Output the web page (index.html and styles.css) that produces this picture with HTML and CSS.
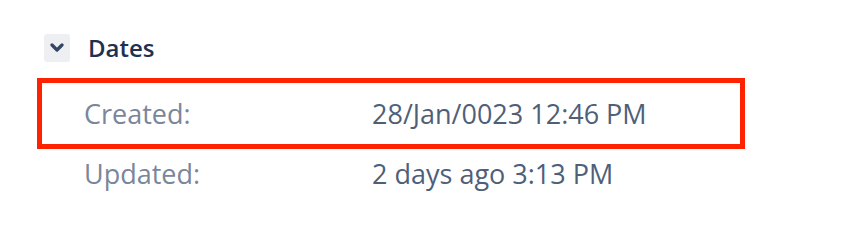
FILE: index.html
```html
<!DOCTYPE html>
<html>
<head>
<meta charset="utf-8">
<link rel="stylesheet" href="styles.css">
</head>
<body>
<section class="panel">
  <div class="panel-header">
    <span class="toggle">
      <svg width="14" height="10" viewBox="0 0 14 10"><path d="M2 2 L7 7 L12 2" fill="none" stroke="#344563" stroke-width="3.2" stroke-linecap="round" stroke-linejoin="round"/></svg>
    </span>
    <h3 class="title">Dates</h3>
  </div>
  <div class="row highlighted">
    <span class="label">Created:</span>
    <span class="value">28/Jan/0023 12:46 PM</span>
  </div>
  <div class="row">
    <span class="label">Updated:</span>
    <span class="value">2 days ago 3:13 PM</span>
  </div>
</section>
</body>
</html>
```
FILE: styles.css
```css
html, body {
  margin: 0;
  padding: 0;
  background: #ffffff;
}
body {
  font-family: "Open Sans", "Noto Sans", sans-serif;
}
.panel {
  width: 708px;
  padding: 34px 0 0 37px;
}
.panel-header {
  display: flex;
  align-items: center;
  height: 28px;
  padding-left: 7px;
  gap: 18px;
}
.toggle {
  width: 26px;
  height: 28px;
  background: #eeeff3;
  border-radius: 3px;
  display: flex;
  align-items: center;
  justify-content: center;
}
.title {
  margin: 0;
  font-size: 24px;
  font-weight: 600;
  color: #1d3153;
  line-height: 28px;
}
.row {
  display: flex;
  align-items: center;
  height: 48px;
  padding-left: 47px;
  font-size: 27px;
}
.row.highlighted {
  height: 61px;
  margin-top: 16px;
  border: 5px solid #ff2200;
  padding-left: 42px;
}
.label {
  width: 288px;
  color: #7a869a;
}
.value {
  color: #505f79;
}
```
